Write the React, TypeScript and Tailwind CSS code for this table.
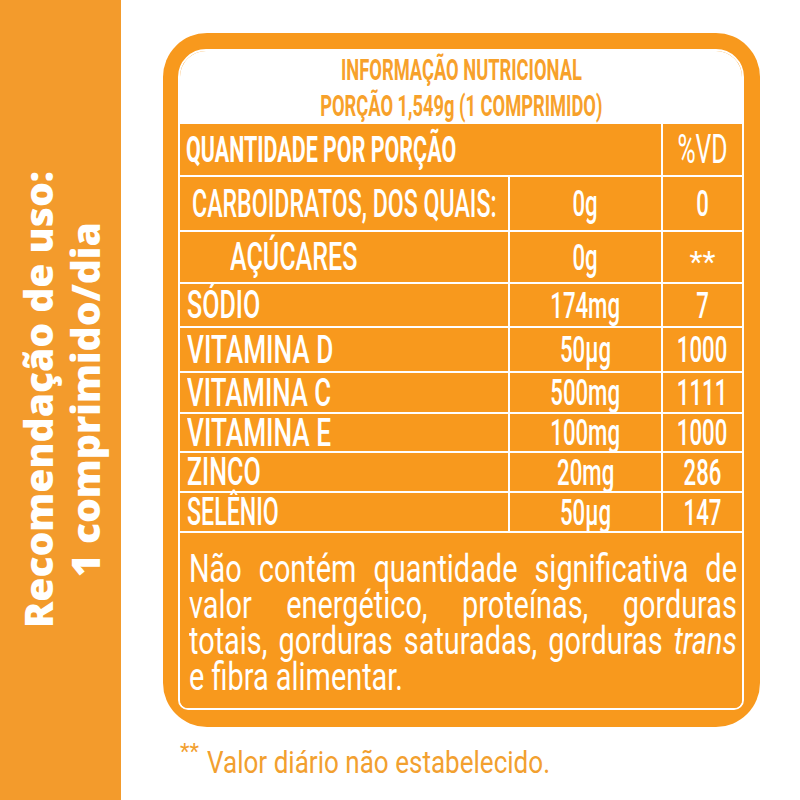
import React from 'react';

const rows = [
  { name: 'CARBOIDRATOS, DOS QUAIS:', amount: '0g', vd: '0', h: 'h-[55px]', pad: 'pl-[12px]', sx: 'scale-x-[0.61]' },
  { name: 'AÇÚCARES', amount: '0g', vd: '**', h: 'h-[52px]', pad: 'pl-[50px]', sx: 'scale-x-[0.66]' },
  { name: 'SÓDIO', amount: '174mg', vd: '7', h: 'h-[44px]', pad: 'pl-[7px]', sx: 'scale-x-[0.66]' },
  { name: 'VITAMINA D', amount: '50µg', vd: '1000', h: 'h-[45px]', pad: 'pl-[7px]', sx: 'scale-x-[0.69]' },
  { name: 'VITAMINA C', amount: '500mg', vd: '1111', h: 'h-[41px]', pad: 'pl-[7px]', sx: 'scale-x-[0.68]' },
  { name: 'VITAMINA E', amount: '100mg', vd: '1000', h: 'h-[39px]', pad: 'pl-[7px]', sx: 'scale-x-[0.69]' },
  { name: 'ZINCO', amount: '20mg', vd: '286', h: 'h-[40px]', pad: 'pl-[7px]', sx: 'scale-x-[0.66]' },
  { name: 'SELÊNIO', amount: '50µg', vd: '147', h: 'h-[40px]', pad: 'pl-[7px]', sx: 'scale-x-[0.61]' },
];

const App = () => {
  return (
    <div className="flex h-[800px] w-[800px] overflow-hidden bg-white font-['Roboto',sans-serif]">
      {/* Left usage bar */}
      <aside className="flex h-full w-[121px] shrink-0 items-center justify-center bg-[#f39b2c]">
        <div className="rotate-180 text-center font-['Open_Sans',sans-serif] text-[39px] font-extrabold leading-[47px] text-white [writing-mode:vertical-rl]">
          Recomendação de uso:
          <br />
          1 comprimido/dia
        </div>
      </aside>

      <main className="w-[679px] pl-[42px] pt-[33px]">
        {/* Nutrition card */}
        <div className="w-[597px] rounded-[44px] bg-[#f8991d] pb-[17px] pl-[15px] pr-[16px] pt-[16px]">
          <div className="overflow-hidden rounded-b-[10px] rounded-t-[28px] border-2 border-white">
            <div className="flex h-[73px] flex-col items-center justify-center bg-white text-[30px] font-bold leading-[36px] text-[#f7a12b]">
              <span className="inline-block origin-center scale-x-[0.61] whitespace-nowrap">INFORMAÇÃO NUTRICIONAL</span>
              <span className="inline-block origin-center scale-x-[0.61] whitespace-nowrap">PORÇÃO 1,549g (1 COMPRIMIDO)</span>
            </div>

            <div className="bg-[#f8991d] text-white">
              <div className="flex h-[53px] border-b-2 border-white">
                <div className="flex w-[483px] shrink-0 items-center border-r-2 border-white pl-[6px]">
                  <span className="inline-block shrink-0 origin-left scale-x-[0.58] whitespace-nowrap text-[37px] font-bold leading-none">
                    QUANTIDADE POR PORÇÃO
                  </span>
                </div>
                <div className="flex min-w-0 flex-1 items-center justify-center">
                  <span className="inline-block shrink-0 origin-center scale-x-[0.62] whitespace-nowrap text-[40px] leading-none">%VD</span>
                </div>
              </div>

              {rows.map((row) => (
                <div key={row.name} className={`flex border-b-2 border-white font-medium ${row.h}`}>
                  <div className={`flex w-[330px] shrink-0 items-center border-r-2 border-white ${row.pad}`}>
                    <span className={`inline-block shrink-0 origin-left whitespace-nowrap text-[38px] leading-none ${row.sx}`}>
                      {row.name}
                    </span>
                  </div>
                  <div className="flex w-[153px] shrink-0 items-center justify-center border-r-2 border-white">
                    <span className="inline-block shrink-0 origin-center scale-x-[0.6] whitespace-nowrap text-[37px] leading-none">
                      {row.amount}
                    </span>
                  </div>
                  <div className="flex min-w-0 flex-1 items-center justify-center">
                    {row.vd === '**' ? (
                      <span className="inline-block translate-y-[5px] text-[30px] font-normal leading-none">**</span>
                    ) : (
                      <span className="inline-block shrink-0 origin-center scale-x-[0.6] whitespace-nowrap text-[37px] leading-none">
                        {row.vd}
                      </span>
                    )}
                  </div>
                </div>
              ))}

              <div className="h-[175px] pl-[9px] pt-[18px]">
                <p className="w-[721px] origin-top-left scale-x-[0.76] text-justify text-[38px] leading-[36px]">
                  Não contém quantidade significativa de valor energético, proteínas, gorduras totais, gorduras
                  saturadas, gorduras <em>trans</em> e fibra alimentar.
                </p>
              </div>
            </div>
          </div>
        </div>

        {/* Footnote */}
        <div className="mt-[20px] flex items-start pl-[17px] text-[#f2a02f]">
          <span className="-mt-[6px] text-[22px] leading-none">**</span>
          <span className="ml-[8px] inline-block origin-left scale-x-[0.84] whitespace-nowrap text-[31px] leading-none">
            Valor diário não estabelecido.
          </span>
        </div>
      </main>
    </div>
  );
};

export default App;
